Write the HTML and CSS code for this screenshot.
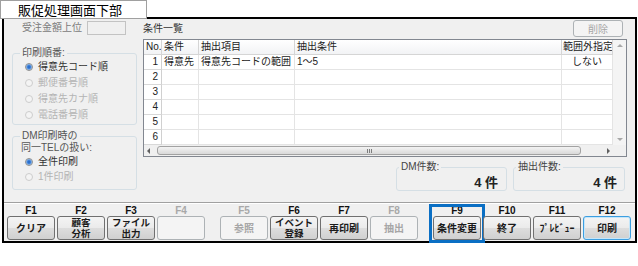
FILE: index.html
```html
<!DOCTYPE html>
<html lang="ja">
<head>
    <meta charset="UTF-8">
    <meta name="viewport" content="width=device-width, initial-scale=1.0">
    <title>販促処理画面下部</title>
    <link rel="stylesheet" href="styles.css">
</head>
<body>
    <div class="tab">販促処理画面下部</div>
    <div class="window">
        <div class="upper">
            <div class="left-panel">
                <div class="amount-row">
                    <span>受注金額上位</span>
                    <span class="textbox"></span>
                </div>

                <fieldset class="group group-order">
                    <legend>印刷順番:</legend>
                    <div class="radio checked"><span class="dot"></span>得意先コード順</div>
                    <div class="radio disabled"><span class="dot"></span>郵便番号順</div>
                    <div class="radio disabled"><span class="dot"></span>得意先カナ順</div>
                    <div class="radio disabled"><span class="dot"></span>電話番号順</div>
                </fieldset>

                <fieldset class="group group-tel">
                    <legend>DM印刷時の</legend>
                    <div class="group-sub">同一TELの扱い:</div>
                    <div class="radio checked"><span class="dot"></span>全件印刷</div>
                    <div class="radio disabled"><span class="dot"></span>1件印刷</div>
                </fieldset>
            </div>

            <div class="right-panel">
                <div class="list-head">
                    <span>条件一覧</span>
                    <button class="btn btn-small" disabled>削除</button>
                </div>

                <div class="grid">
                    <div class="grid-body">
                        <div class="row row-head">
                            <div class="cell">No.</div>
                            <div class="cell">条件</div>
                            <div class="cell">抽出項目</div>
                            <div class="cell">抽出条件</div>
                            <div class="cell cell-tight">範囲外指定</div>
                        </div>
                        <div class="row">
                            <div class="cell num">1</div>
                            <div class="cell">得意先</div>
                            <div class="cell">得意先コードの範囲</div>
                            <div class="cell">1～5</div>
                            <div class="cell center">しない</div>
                        </div>
                        <div class="row">
                            <div class="cell num">2</div>
                            <div class="cell"></div><div class="cell"></div><div class="cell"></div><div class="cell"></div>
                        </div>
                        <div class="row">
                            <div class="cell num">3</div>
                            <div class="cell"></div><div class="cell"></div><div class="cell"></div><div class="cell"></div>
                        </div>
                        <div class="row">
                            <div class="cell num">4</div>
                            <div class="cell"></div><div class="cell"></div><div class="cell"></div><div class="cell"></div>
                        </div>
                        <div class="row">
                            <div class="cell num">5</div>
                            <div class="cell"></div><div class="cell"></div><div class="cell"></div><div class="cell"></div>
                        </div>
                        <div class="row">
                            <div class="cell num">6</div>
                            <div class="cell"></div><div class="cell"></div><div class="cell"></div><div class="cell"></div>
                        </div>
                    </div>
                    <div class="vscroll">
                        <span class="tri up"></span>
                        <span class="tri down"></span>
                    </div>
                    <div class="hscroll">
                        <span class="tri left"></span>
                        <span class="thumb"><span class="grip"></span></span>
                        <span class="tri right"></span>
                    </div>
                    <div class="corner"></div>
                </div>

                <div class="counts">
                    <fieldset class="count">
                        <legend>DM件数:</legend>
                        <div class="count-value">4 件</div>
                    </fieldset>
                    <fieldset class="count count-wide">
                        <legend>抽出件数:</legend>
                        <div class="count-value">4 件</div>
                    </fieldset>
                </div>
            </div>
        </div>

        <div class="keybar">
            <div class="keygroup">
                <div class="key"><div class="key-name">F1</div><button class="btn">クリア</button></div>
                <div class="key"><div class="key-name">F2</div><button class="btn btn-two">顧客<br>分析</button></div>
                <div class="key"><div class="key-name">F3</div><button class="btn btn-two">ファイル<br>出力</button></div>
                <div class="key off"><div class="key-name">F4</div><button class="btn" disabled></button></div>
            </div>
            <div class="keygroup">
                <div class="key off"><div class="key-name">F5</div><button class="btn" disabled>参照</button></div>
                <div class="key"><div class="key-name">F6</div><button class="btn btn-two">イベント<br>登録</button></div>
                <div class="key"><div class="key-name">F7</div><button class="btn">再印刷</button></div>
                <div class="key off"><div class="key-name">F8</div><button class="btn" disabled>抽出</button></div>
            </div>
            <div class="keygroup">
                <div class="key">
                    <div class="key-name">F9</div><button class="btn">条件変更</button>
                    <div class="highlight">
                        <svg width="16" height="23" viewBox="0 0 16 23">
                            <rect x="5" y="0" width="6" height="15" fill="#0a6fc4"/>
                            <polygon points="0,14 16,14 8,23" fill="#0a6fc4"/>
                        </svg>
                    </div>
                </div>
                <div class="key"><div class="key-name">F10</div><button class="btn">終了</button></div>
                <div class="key"><div class="key-name">F11</div><button class="btn">ﾌﾟﾚﾋﾞｭｰ</button></div>
                <div class="key"><div class="key-name">F12</div><button class="btn btn-default">印刷</button></div>
            </div>
        </div>
    </div>
</body>
</html>
```

FILE: styles.css
```css
body {
    margin: 0;
    background: #fff;
    font-family: "Liberation Sans", "Noto Sans CJK JP", sans-serif;
    font-size: 10px;
    color: #333;
}

.tab {
    position: relative;
    z-index: 1;
    box-sizing: border-box;
    width: 147px;
    height: 19px;
    padding-left: 17px;
    border: 1px solid #a0a0a0;
    background: #fff;
    color: #000;
    font-family: "Noto Sans CJK JP", sans-serif;
    font-size: 13px;
    line-height: 17px;
}

.window {
    box-sizing: border-box;
    width: 635px;
    height: 226px;
    margin: -2px 0 0 2px;
    border: 2px solid #000;
    background: #f0f0f0;
}

.upper {
    display: flex;
    gap: 6px;
    height: 183px;
    padding: 0 8px;
}

/* left side */

.left-panel {
    width: 125px;
    flex-shrink: 0;
}

.amount-row {
    display: flex;
    align-items: center;
    height: 14px;
    margin-top: 2px;
    padding-left: 10px;
    color: #7a7a7a;
    line-height: 14px;
}

.textbox {
    box-sizing: border-box;
    width: 39px;
    height: 14px;
    margin-left: 5px;
    border: 1px solid #c3c3c3;
    background: #f0f0f0;
}

.group {
    min-width: 0;
    margin: 12px 0 0;
    padding: 0 4px 1px 7px;
    border: 1px solid #d5dfe5;
    border-radius: 3px;
}

.group legend {
    padding: 0 2px;
    line-height: 12px;
    color: #555;
}

.group-tel {
    margin-top: 5px;
    padding-bottom: 5px;
}

.group-sub {
    margin-left: 1px;
    line-height: 12px;
    color: #555;
}

.radio {
    display: flex;
    align-items: center;
    height: 16px;
    line-height: 16px;
    color: #333;
}

.group-tel .radio {
    height: 15px;
    line-height: 15px;
}

.radio .dot {
    box-sizing: border-box;
    width: 8px;
    height: 8px;
    margin: 0 5px;
    border: 1px solid #8e8f8f;
    border-radius: 50%;
    background: #f4f4f4;
}

.radio.checked .dot {
    background: radial-gradient(circle, #1d5fc0 0, #3b7fd8 1.5px, #9cc3ee 3px, #eef2f6 3.6px);
}

.radio.disabled {
    color: #b4b4b4;
}

.radio.disabled .dot {
    border-color: #cdcdcd;
}

/* right side */

.right-panel {
    flex: 1;
    min-width: 0;
}

.list-head {
    display: flex;
    justify-content: space-between;
    align-items: center;
    height: 17px;
    margin: 1px 0 2px;
    line-height: 14px;
}

.grid {
    display: grid;
    grid-template-columns: 469px 13px;
    grid-template-rows: 105px 11px;
    border: 1px solid #828790;
    background: #fff;
}

.row {
    display: grid;
    grid-template-columns: 18px 37px 96px 267px 51px;
    height: 15px;
}

.cell {
    box-sizing: border-box;
    padding: 0 2px;
    border-right: 1px solid #e4e4e4;
    border-bottom: 1px solid #e4e4e4;
    line-height: 14px;
    white-space: nowrap;
    overflow: hidden;
    color: #222;
}

.row-head .cell {
    background: linear-gradient(#ffffff, #f2f3f5);
    border-color: #d5d5d5;
}

.row-head .cell-tight {
    padding: 0 0 0 1px;
}

.cell.num {
    text-align: right;
    padding-right: 3px;
    border-right-color: #d0d0d0;
    border-bottom-color: #d8d8d8;
}

.cell.center {
    text-align: center;
}

.vscroll {
    display: flex;
    flex-direction: column;
    justify-content: space-between;
    align-items: center;
    padding: 4px 0;
    box-sizing: border-box;
    background: #f4f4f4;
}

.hscroll {
    display: flex;
    align-items: center;
    background: #f0f0f0;
}

.corner {
    background: #f0f0f0;
}

.tri {
    width: 0;
    height: 0;
    border: 3px solid transparent;
}

.tri.up {
    border-top-width: 0;
    border-bottom-color: #a8a8a8;
}

.tri.down {
    border-bottom-width: 0;
    border-top-color: #a8a8a8;
}

.tri.left {
    margin-left: 3px;
    border-left-width: 0;
    border-right-color: #606060;
}

.tri.right {
    margin: 0 3px 0 auto;
    border-right-width: 0;
    border-left-color: #606060;
}

.thumb {
    display: flex;
    align-items: center;
    justify-content: center;
    box-sizing: border-box;
    width: 424px;
    height: 9px;
    margin-left: 7px;
    border: 1px solid #a2a2a2;
    border-radius: 3px;
    background: linear-gradient(#f3f3f3, #d9d9d9);
}

.grip {
    width: 5px;
    height: 4px;
    background: linear-gradient(90deg, #7d7d7d 1px, transparent 1px);
    background-size: 2px 100%;
}

.counts {
    display: flex;
    justify-content: flex-end;
    gap: 6px;
    margin-top: 4px;
    padding-right: 2px;
}

.count {
    box-sizing: border-box;
    width: 111px;
    min-width: 0;
    margin: 0;
    padding: 0 8px 0 2px;
    border: 1px solid #d5dfe5;
    border-radius: 3px;
}

.count-wide {
    width: 112px;
    padding-right: 7px;
}

.count legend {
    padding: 0 2px;
    line-height: 12px;
    color: #444;
}

.count-value {
    padding-top: 3px;
    text-align: right;
    font-size: 13px;
    font-weight: bold;
    line-height: 14px;
    color: #222;
}

/* function keys */

.keybar {
    display: flex;
    gap: 15px;
    padding: 2px 0 1px 3px;
    border-top: 1px solid #a0a0a0;
    box-shadow: inset 0 1px 0 #fff;
}

.keygroup {
    display: flex;
    gap: 2px;
}

.key {
    position: relative;
    width: 48px;
}

.key-name {
    height: 11px;
    text-align: center;
    font-weight: bold;
    line-height: 11px;
    color: #111;
}

.key.off .key-name {
    color: #a8a8a8;
}

.btn {
    display: flex;
    align-items: center;
    justify-content: center;
    box-sizing: border-box;
    width: 48px;
    height: 24px;
    margin: 0;
    padding: 0;
    border: 1px solid #707070;
    border-radius: 3px;
    background: linear-gradient(#f4f4f4, #ebebeb 48%, #dddddd 52%, #d0d0d0);
    font-family: "Noto Sans CJK JP", sans-serif;
    font-size: 10px;
    font-weight: bold;
    line-height: 12px;
    color: #1a1a1a;
    text-align: center;
}

.btn-two {
    font-size: 9.5px;
    line-height: 11px;
}

.btn:disabled {
    border-color: #adb2b5;
    background: #f4f4f4;
    color: #a6a6a6;
}

.btn-default {
    border-color: #3c9ee0;
    box-shadow: inset 0 0 0 1px #c4e6fa;
}

.btn-small {
    width: 50px;
    height: 17px;
    margin-right: 4px;
    font-weight: normal;
}

.highlight {
    position: absolute;
    top: -1px;
    right: -4px;
    bottom: -3px;
    left: -4px;
    border: 3px solid #0a6fc4;
}

.highlight svg {
    position: absolute;
    top: calc(100% + 3px);
    left: 50%;
    margin-left: -8px;
}
```
